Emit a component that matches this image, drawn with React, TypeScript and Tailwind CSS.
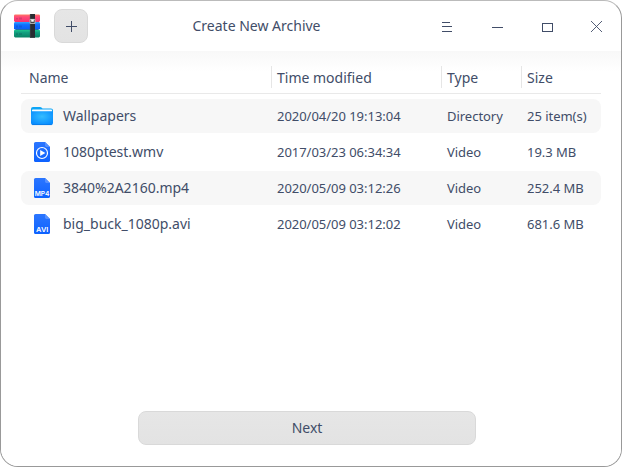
import type { ReactNode } from "react";

type Kind = "folder" | "video" | "MP4" | "AVI";

const files: { kind: Kind; name: string; time: string; type: string; size: string }[] = [
  { kind: "folder", name: "Wallpapers", time: "2020/04/20 19:13:04", type: "Directory", size: "25 item(s)" },
  { kind: "video", name: "1080ptest.wmv", time: "2017/03/23 06:34:34", type: "Video", size: "19.3 MB" },
  { kind: "MP4", name: "3840%2A2160.mp4", time: "2020/05/09 03:12:26", type: "Video", size: "252.4 MB" },
  { kind: "AVI", name: "big_buck_1080p.avi", time: "2020/05/09 03:12:02", type: "Video", size: "681.6 MB" },
];

const columns = "grid grid-cols-[250px_170px_80px_80px]";

function ArchiveLogo() {
  return (
    <svg width="28" height="26" viewBox="0 0 28 26">
      <defs>
        <linearGradient id="red" x2="0" y2="1"><stop stopColor="#ff7a63" /><stop offset=".35" stopColor="#ff4a78" /><stop offset="1" stopColor="#f8326f" /></linearGradient>
        <linearGradient id="blue" x2="0" y2="1"><stop stopColor="#2fa4ff" /><stop offset=".35" stopColor="#1070ff" /><stop offset="1" stopColor="#0a5cf5" /></linearGradient>
        <linearGradient id="green" x2="0" y2="1"><stop stopColor="#1fc78c" /><stop offset=".35" stopColor="#12a080" /><stop offset="1" stopColor="#078265" /></linearGradient>
      </defs>
      <rect x="2.5" y="3" width="23" height="20" fill="#3b466c" />
      <rect x="1" y="1.4" width="26" height="7.5" rx="1.3" fill="url(#red)" />
      <rect x="1" y="9.1" width="26" height="7.5" rx="1.3" fill="url(#blue)" />
      <rect x="1" y="16.8" width="26" height="7.6" rx="1.3" fill="url(#green)" />
      <g fill="#14243f" fillOpacity=".16">
        <path d="M3 5h2v1.5H3zM6 4.5h3v2H6zM3 12.5h2v2H3zM6 12.5h3v2H6zM3 20h2v2H3zM6 20h3v2H6z" />
      </g>
      <rect x="17" y="1" width="5" height="23.8" fill="#292c31" />
      <path d="M17.3 1v23.5" stroke="#46494e" strokeWidth=".6" />
      <path d="M17 6.4h5v4h-5z" fill="#34373b" stroke="#b9b9bb" strokeWidth="1" />
      <path d="M18.5 6.4v2h2v-2" fill="#fff" stroke="#eee" strokeWidth=".7" />
    </svg>
  );
}

function FolderIcon() {
  return (
    <svg width="24" height="20" viewBox="0 0 24 20">
      <defs>
        <radialGradient id="folder" cx=".5" cy=".38" r=".65"><stop stopColor="#35bdff" /><stop offset="1" stopColor="#078cff" /></radialGradient>
      </defs>
      <path d="M1 3Q1 1 3 1H10Q11 1 11.8 1.8L12.5 2.4H21Q23 2.4 23 4.3V12H1Z" fill="#0ca5f7" />
      <rect x="2" y="3.6" width="20" height="4" rx=".8" fill="#f5fbff" />
      <path d="M1 6L2 5.3H22L23 6V17Q23 19 21 19H3Q1 19 1 17Z" fill="url(#folder)" />
      <path d="M2 18.6H22" stroke="#0876df" strokeWidth=".7" />
    </svg>
  );
}

function FileIcon({ kind }: { kind: Kind }) {
  if (kind === "folder") return <FolderIcon />;
  return (
    <svg width="18" height="22" viewBox="0 0 18 22">
      <defs>
        <linearGradient id={"page-" + kind} x2="0" y2="1"><stop stopColor="#2b76ff" /><stop offset="1" stopColor="#0d62ff" /></linearGradient>
      </defs>
      <path d="M2.6 1H12L17 6V19.4Q17 21 15.4 21H2.6Q1 21 1 19.4V2.6Q1 1 2.6 1Z" fill={"url(#page-" + kind + ")"} />
      <path d="M12 1L17 6H13.4Q12 6 12 4.6Z" fill="#5590ff" />
      {kind === "video" ? (
        <>
          <circle cx="9" cy="12" r="5.5" fill="none" stroke="#fff" strokeWidth="1.15" />
          <path d="M7.2 9L12.3 12L7.2 15Z" fill="#fff" />
        </>
      ) : (
        <text
          x={kind === "MP4" ? 1.7 : 3}
          y="18.8"
          textLength={kind === "MP4" ? 14.8 : 12.4}
          lengthAdjust="spacingAndGlyphs"
          className="fill-white font-['Inter',sans-serif] text-[6.6px] font-semibold"
        >
          {kind}
        </text>
      )}
    </svg>
  );
}

function WindowButton({ label, children }: { label: string; children: ReactNode }) {
  return (
    <button aria-label={label} className="flex h-[50px] w-[50px] items-center justify-center">
      <svg width="12" height="12" viewBox="0 0 12 12" fill="none" stroke="#414d68" shapeRendering="crispEdges">
        {children}
      </svg>
    </button>
  );
}

export default function App() {
  return (
    <div className="h-[467px] w-[622px] bg-white font-['Noto_Sans',sans-serif] text-sm text-[#414d68]">
      <main className="flex h-full flex-col overflow-hidden rounded-[18px] border border-[#999] border-t-[#bbb] bg-white">
        <header className="flex h-[50px] shrink-0 items-center pl-3">
          <ArchiveLogo />
          <button aria-label="Add files" className="ml-[13px] flex size-[34px] items-center justify-center rounded-lg border border-[#d9d9d9] bg-linear-to-b from-[#e6e6e6] to-[#e3e3e3]">
            <svg width="12" height="12" viewBox="0 0 12 12" stroke="#414d68" shapeRendering="crispEdges">
              <path d="M6.5 1V12M1 6.5H12" />
            </svg>
          </button>
          <h1 className="flex-1 pl-[3px] text-center">Create New Archive</h1>
          <div className="-mr-px flex">
            <WindowButton label="Menu"><path d="M1 2.5H9M1 6.5H11M1 11.5H11" /></WindowButton>
            <WindowButton label="Minimize"><path d="M1 7.5H12" /></WindowButton>
            <WindowButton label="Maximize"><path d="M1.5 3.5H11.5V11.5H1.5Z" /></WindowButton>
            <WindowButton label="Close"><path d="M0 1L11 12M11 1L0 12" strokeWidth=".9" shapeRendering="geometricPrecision" /></WindowButton>
          </div>
        </header>
        <section className="flex flex-1 flex-col bg-linear-to-b from-[#f8f8f8] to-white to-[20px] px-5 pt-[9px] pb-[21px]">
          <div className={columns + " h-[34px] items-center border-b border-[#e9e9e9]"}>
            <span className="pt-0.5 pl-2">Name</span>
            {["Time modified", "Type", "Size"].map((title) => (
              <span key={title} className="h-[22px] border-l border-[#e6e6e6] pl-[5px] leading-6">{title}</span>
            ))}
          </div>
          <div className="mt-[5px] flex flex-col gap-0.5">
            {files.map((file) => (
              <div key={file.name} className={columns + " h-[34px] items-center rounded-lg odd:bg-[#f7f7f7]"}>
                <div className="flex items-center">
                  <span className="ml-[9px] flex w-6 justify-center"><FileIcon kind={file.kind} /></span>
                  <span className="ml-[9px]">{file.name}</span>
                </div>
                <span className="pl-1.5 text-[13px] tracking-[-0.03px]">{file.time}</span>
                <span className="pl-1.5 text-[13px] tracking-[-0.03px]">{file.type}</span>
                <span className="pl-1.5 text-[13px] tracking-[-0.03px]">{file.size}</span>
              </div>
            ))}
          </div>
          <button className="mt-auto ml-[117px] h-[34px] w-[338px] rounded-lg border border-[#d9d9d9] bg-linear-to-b from-[#e6e6e6] to-[#e3e3e3]">
            Next
          </button>
        </section>
      </main>
    </div>
  );
}
